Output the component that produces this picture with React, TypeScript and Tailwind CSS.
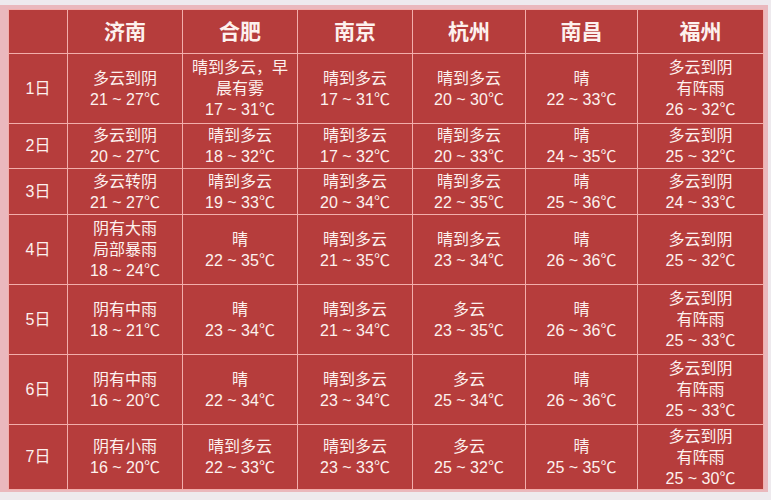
import { Fragment } from "react"

const cities = ["济南", "合肥", "南京", "杭州", "南昌", "福州"]

const rows: string[][][] = [
  [
    ["多云到阴", "21 ~ 27℃"],
    ["晴到多云，早", "晨有雾", "17 ~ 31℃"],
    ["晴到多云", "17 ~ 31℃"],
    ["晴到多云", "20 ~ 30℃"],
    ["晴", "22 ~ 33℃"],
    ["多云到阴", "有阵雨", "26 ~ 32℃"],
  ],
  [
    ["多云到阴", "20 ~ 27℃"],
    ["晴到多云", "18 ~ 32℃"],
    ["晴到多云", "17 ~ 32℃"],
    ["晴到多云", "20 ~ 33℃"],
    ["晴", "24 ~ 35℃"],
    ["多云到阴", "25 ~ 32℃"],
  ],
  [
    ["多云转阴", "21 ~ 27℃"],
    ["晴到多云", "19 ~ 33℃"],
    ["晴到多云", "20 ~ 34℃"],
    ["晴到多云", "22 ~ 35℃"],
    ["晴", "25 ~ 36℃"],
    ["多云到阴", "24 ~ 33℃"],
  ],
  [
    ["阴有大雨", "局部暴雨", "18 ~ 24℃"],
    ["晴", "22 ~ 35℃"],
    ["晴到多云", "21 ~ 35℃"],
    ["晴到多云", "23 ~ 34℃"],
    ["晴", "26 ~ 36℃"],
    ["多云到阴", "25 ~ 32℃"],
  ],
  [
    ["阴有中雨", "18 ~ 21℃"],
    ["晴", "23 ~ 34℃"],
    ["晴到多云", "21 ~ 34℃"],
    ["多云", "23 ~ 35℃"],
    ["晴", "26 ~ 36℃"],
    ["多云到阴", "有阵雨", "25 ~ 33℃"],
  ],
  [
    ["阴有中雨", "16 ~ 20℃"],
    ["晴", "22 ~ 34℃"],
    ["晴到多云", "23 ~ 34℃"],
    ["多云", "25 ~ 34℃"],
    ["晴", "26 ~ 36℃"],
    ["多云到阴", "有阵雨", "25 ~ 33℃"],
  ],
  [
    ["阴有小雨", "16 ~ 20℃"],
    ["晴到多云", "22 ~ 33℃"],
    ["晴到多云", "23 ~ 33℃"],
    ["多云", "25 ~ 32℃"],
    ["晴", "25 ~ 35℃"],
    ["多云到阴", "有阵雨", "25 ~ 30℃"],
  ],
]

export default function App() {
  return (
    <div
      className="w-[771px] h-[500px] bg-[#eeeaee] pt-[5px]"
      style={{ fontFamily: '"Liberation Sans", "Noto Sans CJK SC", sans-serif' }}
    >
      <div className="w-[768px] h-[487px] bg-[#eab8bd] pl-[8px] pt-[4px]">
        <div className="grid grid-cols-[59px_115px_115px_115px_113px_112px_126px] grid-rows-[44px_70px_45px_46px_70px_70px_70px_65px] w-[755px] bg-[#b63d3c] text-[#fdf1ee] border-l border-t border-[#f2aeab]">
          <div className="border-r border-b border-[#f2aeab]" />
          {cities.map((c) => (
            <div
              key={c}
              className="border-r border-b border-[#f2aeab] flex items-center justify-center text-[21px] font-bold"
            >
              {c}
            </div>
          ))}
          {rows.map((row, i) => (
            <Fragment key={i}>
              <div className="border-r border-b border-[#f2aeab] flex items-center justify-center text-[16px]">
                {i + 1}日
              </div>
              {row.map((cell, j) => (
                <div
                  key={j}
                  className="border-r border-b border-[#f2aeab] flex flex-col items-center justify-center text-[16px] leading-[21px]"
                >
                  {cell.map((line, k) => (
                    <span key={k}>{line}</span>
                  ))}
                </div>
              ))}
            </Fragment>
          ))}
        </div>
      </div>
    </div>
  )
}
